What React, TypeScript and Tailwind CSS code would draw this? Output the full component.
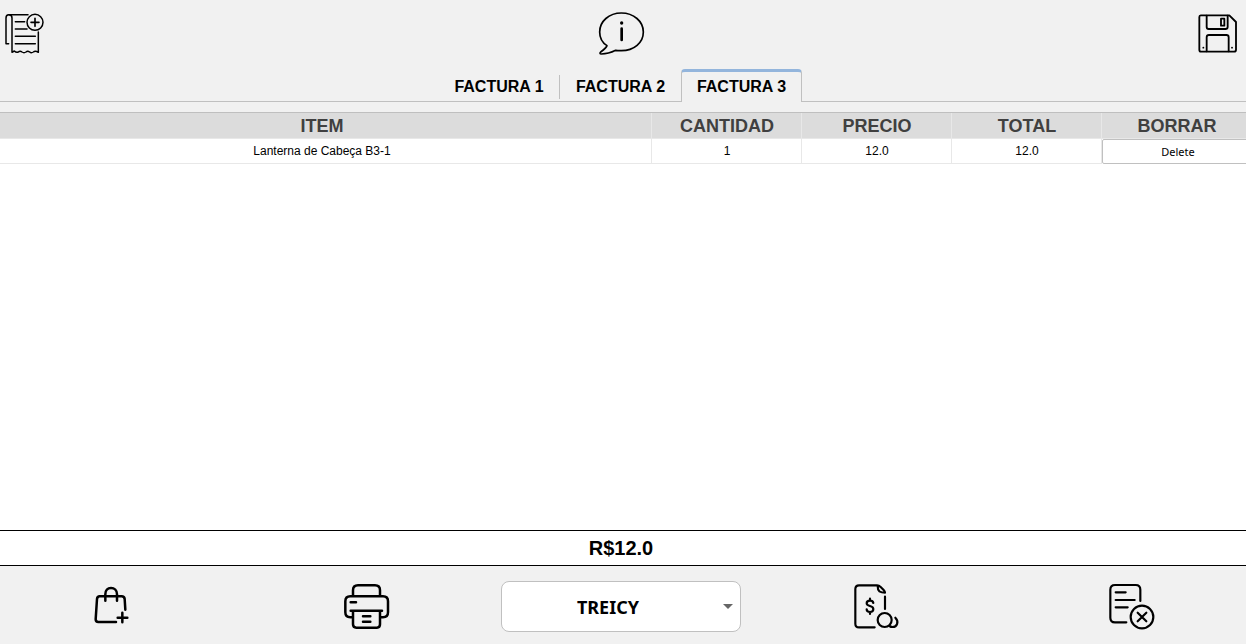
import { useState, type ReactNode } from "react";

type IconButtonProps = {
  label: string;
  viewBox: string;
  strokeWidth: number;
  children: ReactNode;
};

function IconButton({ label, viewBox, strokeWidth, children }: IconButtonProps) {
  return (
    <button type="button" aria-label={label} className="size-12 shrink-0">
      <svg
        viewBox={viewBox}
        className="size-12 overflow-visible text-black"
        fill="none"
        stroke="currentColor"
        strokeWidth={strokeWidth}
        strokeLinecap="round"
        strokeLinejoin="round"
        aria-hidden="true"
      >
        {children}
      </svg>
    </button>
  );
}

const invoices = ["FACTURA 1", "FACTURA 2", "FACTURA 3"];
const columns = ["ITEM", "CANTIDAD", "PRECIO", "TOTAL", "BORRAR"];
const rows = [{ item: "Lanterna de Cabeça B3-1", quantity: "1", price: "12.0", total: "12.0" }];

function Toolbar() {
  return (
    <header className="flex items-start justify-between pt-2.5 pr-1 pb-[11px]">
      <IconButton label="Nueva factura" viewBox="0 30 144 144" strokeWidth={4.5}>
        <path d="M84 44H26q-8 0-8 10v77h8" />
        <path d="M27 44q9 0 9 10v103l7-4q6 6 12 3 5-5 11 0 6 4 12 0 5-5 11 0 5 4 11 0 6-5 15 1V96" />
        <path d="M46 65h28M46 87h35M46 109h60M46 131h60" />
        <circle cx="105" cy="67" r="24" />
        <path d="M105 55v24M93 67h24" strokeWidth={5} />
      </IconButton>
      <IconButton label="Información" viewBox="21 18 144 144" strokeWidth={5}>
        <path d="M51 125C35 115 29 101 29 84c0-32 28-57 65-57s66 25 66 57-28 56-66 56c-6 0-12 0-17-1-10 5-25 11-43 11-5 0-5-3-2-6 10-7 16-11 19-19z" />
        <path d="M95 74v34" strokeWidth={8} />
        <circle cx="95" cy="57" r="5" fill="currentColor" stroke="none" />
      </IconButton>
      <IconButton label="Guardar" viewBox="24 18 144 144" strokeWidth={5.5}>
        <path d="M44 34h86l20 20v83q0 6-6 6H45q-5 0-5-6V39q0-5 4-5z" />
        <path d="M62 35v34q0 6 6 6h50q7 0 7-6V35M62 142v-42q0-7 7-7h52q7 0 7 7v42" />
        <rect x="105" y="44" width="10" height="21" />
        <path d="M52 131h.1M138 131h.1" />
      </IconButton>
    </header>
  );
}

function InvoiceTabs() {
  const [active, setActive] = useState(2);
  return (
    <div role="tablist" className="flex h-[33px] justify-center border-b border-[#c0c0c0] pr-[5px]">
      {invoices.map((name, index) => (
        <button
          key={name}
          type="button"
          role="tab"
          aria-selected={index === active}
          onClick={() => setActive(index)}
          className={
            index === active
              ? "-mb-px w-[121px] rounded-t border-x border-t-3 border-x-[#c0c0c0] border-t-[#93b5dc] bg-[#f1f1f1]"
              : "flex w-[121px] items-center pt-1 pb-px"
          }
        >
          <span
            className={
              index !== active && index + 1 !== active && index < invoices.length - 1
                ? "block w-full border-r border-[#c0c0c0]"
                : "block w-full"
            }
          >
            {name}
          </span>
        </button>
      ))}
    </div>
  );
}

function ItemsTable() {
  return (
    <main className="mt-2.5 flex-1 overflow-hidden border-t border-[#bfbfbf] bg-white">
      <div className="-mr-1.5 -ml-2">
        <table className="w-full table-fixed border-separate border-spacing-0 text-center">
          <colgroup>
            <col />
            <col className="w-[150px]" />
            <col className="w-[150px]" />
            <col className="w-[150px]" />
            <col className="w-[150px]" />
          </colgroup>
          <thead>
            <tr>
              {columns.map((column) => (
                <th
                  key={column}
                  scope="col"
                  className="h-[26px] border-r border-b border-[#e8e8e8] bg-[#dcdcdc] p-0 pl-px text-lg leading-6 font-bold text-[#404040]"
                >
                  {column}
                </th>
              ))}
            </tr>
          </thead>
          <tbody className="text-xs text-black">
            {rows.map((row) => (
              <tr key={row.item}>
                <td className="h-[25px] border-r border-b border-[#e8e8e8] p-0 pl-px">{row.item}</td>
                <td className="border-r border-b border-[#e8e8e8] p-0 pl-px">{row.quantity}</td>
                <td className="border-r border-b border-[#e8e8e8] p-0 pl-px">{row.price}</td>
                <td className="border-r border-b border-[#e8e8e8] p-0 pl-px">{row.total}</td>
                <td className="p-0">
                  <button
                    type="button"
                    className="block h-[25px] w-full rounded-xs border border-[#c0c0c0] bg-white pt-0.5 pl-0.5 font-['Noto_Sans',sans-serif] text-[11px]"
                  >
                    Delete
                  </button>
                </td>
              </tr>
            ))}
          </tbody>
        </table>
      </div>
    </main>
  );
}

function Actions() {
  return (
    <footer className="overflow-hidden">
      <div className="-mr-3 -ml-4 grid h-[78px] grid-cols-5 place-items-center">
        <IconButton label="Agregar producto" viewBox="7 15 144 144" strokeWidth={7.5}>
          <path d="M94 138H41q-8 0-8-8l4-61q1-8 8-8h66q8 0 9 8l2 32" />
          <path d="M62 74V55c0-12 7-19 17-19s18 7 18 19v19M113 110v29M99 125h29" />
        </IconButton>
        <IconButton label="Imprimir" viewBox="18 15 144 144" strokeWidth={7.5}>
          <path d="M51 59V43q0-15 15-15h51q15 0 15 15v16" />
          <path d="M50 124H43q-15 0-15-15V76q0-15 15-15h98q15 0 15 15v33q0 15-15 15h-7" />
          <path d="M44 104h94M51 104v41q0 10 10 10h62q9 0 9-10v-41M44 79h16M81 121h22M81 137h22" />
        </IconButton>
        <div className="relative mt-0.5 h-[51px] w-60">
          <select
            aria-label="Vendedor"
            defaultValue="TREICY"
            className="h-full w-full appearance-none rounded-lg border border-[#c0c0c0] bg-white pt-0.5 pr-[26px] text-center font-['Noto_Sans',sans-serif] text-lg font-bold text-black [text-align-last:center]"
          >
            <option>TREICY</option>
          </select>
          <svg
            viewBox="0 0 10 5"
            className="pointer-events-none absolute top-[23px] right-2 h-[5px] w-2.5 text-[#666666]"
            fill="currentColor"
            aria-hidden="true"
          >
            <path d="M0 0h10L5 5z" />
          </svg>
        </div>
        <IconButton label="Cobrar" viewBox="18 15 144 144" strokeWidth={6.5}>
          <path d="M86 154H39q-11 0-11-11V39q0-11 11-11h54q6 0 11 5l9 9q4 4 4 8-10 0-17-4-5-5-5-16M117 62v37" />
          <path d="M82 81c-1-5-5-7-10-7-6 0-10 3-10 8 0 11 20 5 20 17 0 6-4 9-10 9s-10-3-10-8M72 68v6M72 108v6" />
          <circle cx="116" cy="132" r="21" />
          <path d="M148 125c12 12 5 28-8 28-4 0-7-1-10-3" />
        </IconButton>
        <IconButton label="Cancelar factura" viewBox="20 15 144 144" strokeWidth={6.5}>
          <path d="M78 139H44q-14 0-14-14V41q0-14 14-14h62q14 0 14 14v34M46 49h30M46 72h57M46 94h36" />
          <circle cx="125" cy="123" r="34" />
          <path d="M112 110l26 26M138 110l-26 26" />
        </IconButton>
      </div>
    </footer>
  );
}

export default function App() {
  return (
    <div className="flex min-h-screen flex-col bg-[#f1f1f1] font-['Liberation_Sans',Arial,sans-serif] text-black">
      <Toolbar />
      <div className="font-bold">
        <InvoiceTabs />
      </div>
      <ItemsTable />
      <output className="block border-y border-black bg-white text-center text-xl leading-[34px] font-bold">
        <span className="pr-1">R$12.0</span>
      </output>
      <Actions />
    </div>
  );
}
